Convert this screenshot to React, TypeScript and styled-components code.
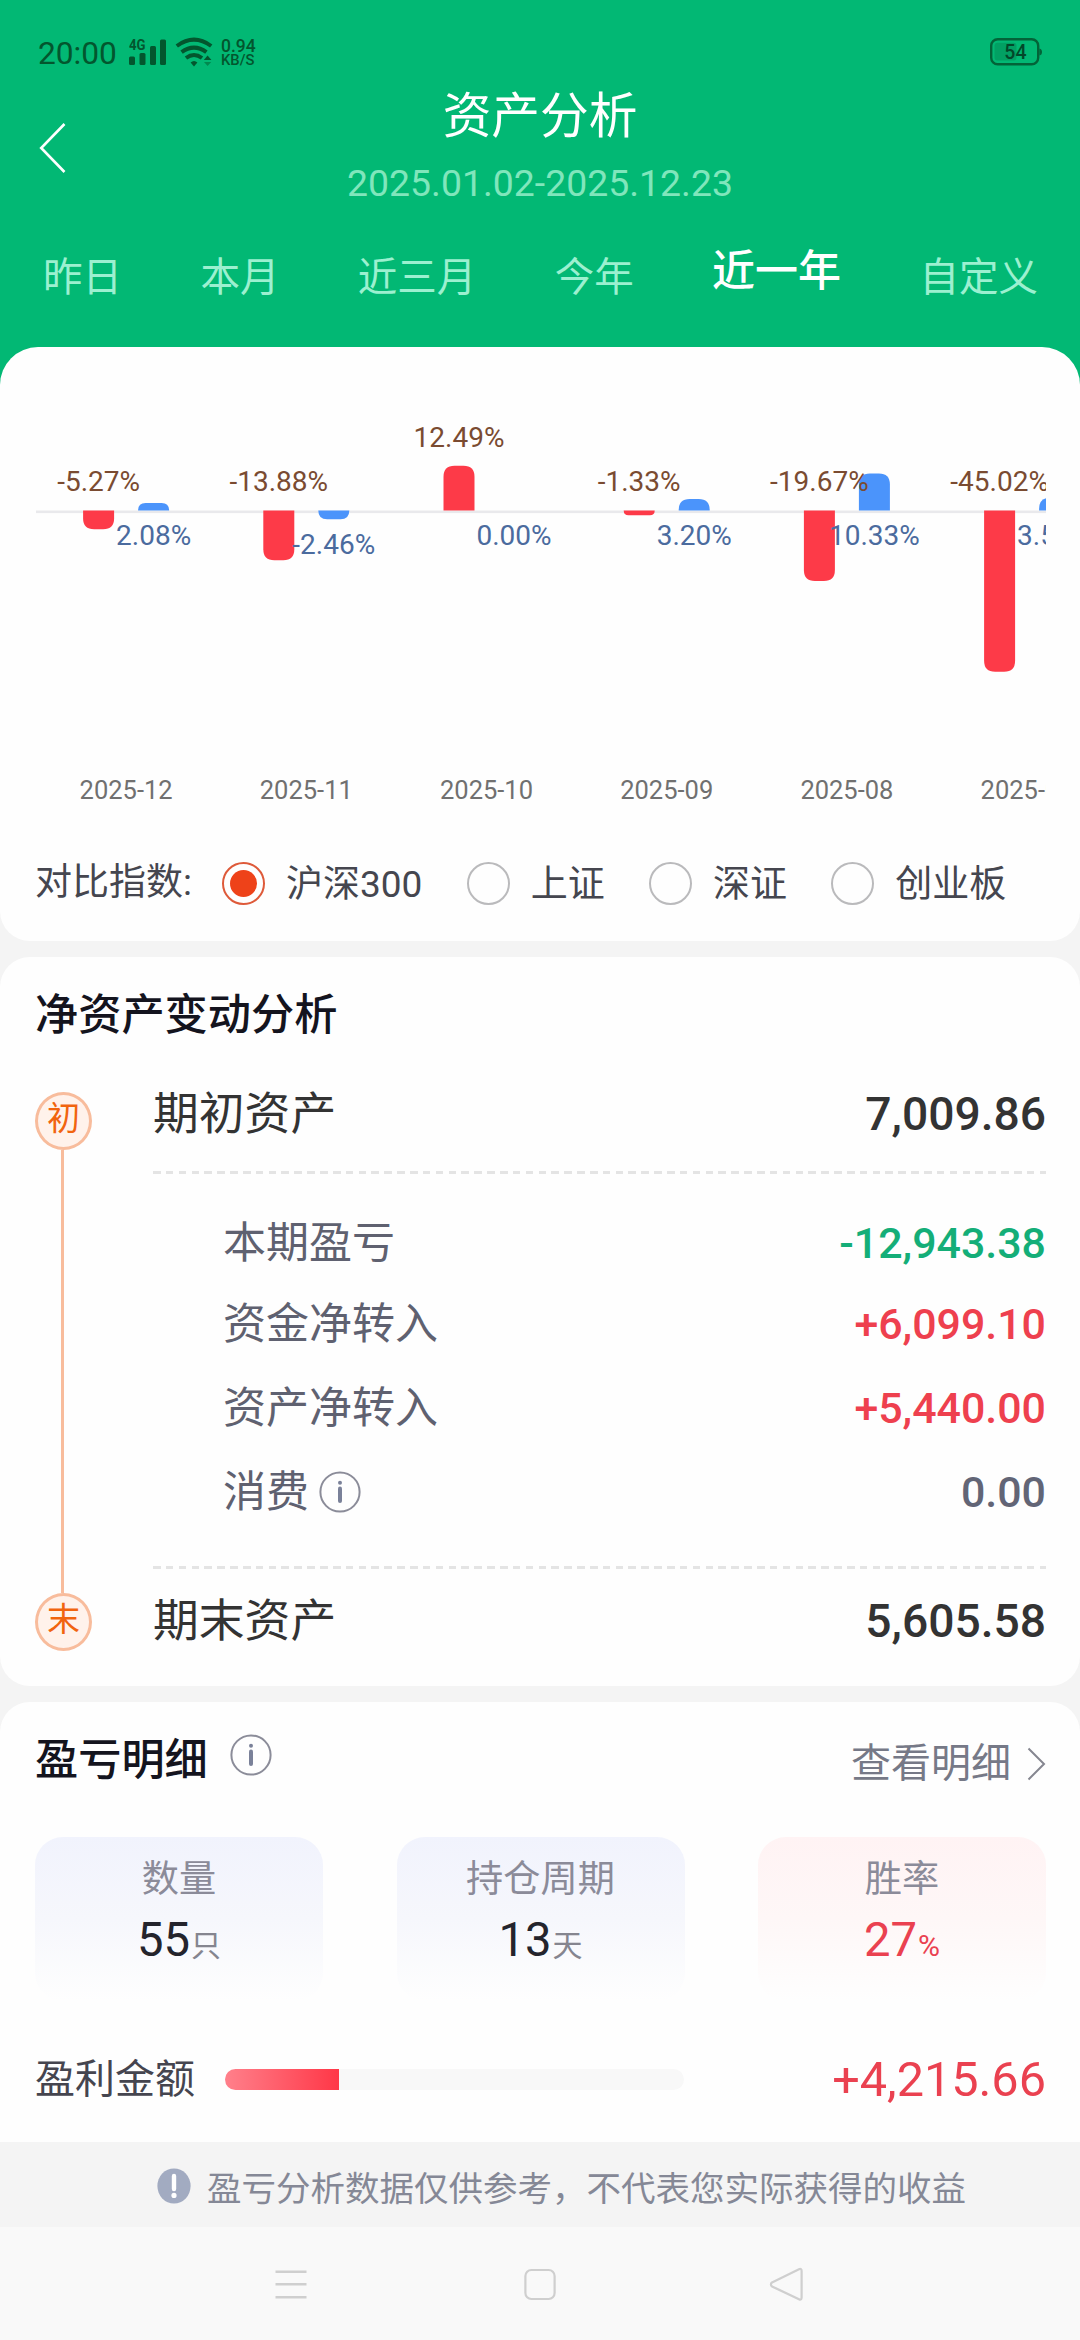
import React from "react";
import styled, { createGlobalStyle, css } from "styled-components";

const GlobalStyle = createGlobalStyle`
  html, body { margin: 0; padding: 0; }
  body {
    background: #f9f9f9;
    font-family: Roboto, "Noto Sans CJK SC", sans-serif;
    -webkit-font-smoothing: antialiased;
  }
  * { box-sizing: border-box; }
`;

const Screen = styled.div`
  width: 1080px;
  height: 2340px;
  display: flex;
  flex-direction: column;
  overflow: hidden;
  background: #f4f4f4;
`;

/* ---------- header ---------- */

const Header = styled.header`
  height: 387px;
  margin-bottom: -40px;
  flex: none;
  display: flex;
  flex-direction: column;
  background: #02b874;
`;

const StatusBar = styled.div`
  height: 76px;
  padding: 27px 37px 0 38px;
  display: flex;
  align-items: flex-start;
  justify-content: space-between;
  color: #03562e;
`;

const StatusGroup = styled.div`
  display: flex;
  align-items: center;
  height: 50px;
`;

const Clock = styled.span`
  font-size: 31.7px;
  line-height: 50px;
  width: 91px;
  padding-top: 3px;
`;

const StatusIcon = styled.svg`
  display: block;
  flex: none;
`;

const WifiIcon = styled(StatusIcon)`
  margin-left: 8px;
`;

const Speed = styled.div`
  display: flex;
  flex-direction: column;
  margin-left: 8px;
  font-weight: 500;
`;

const SpeedValue = styled.span`
  font-size: 17.5px;
  line-height: 15px;
`;

const SpeedUnit = styled.span`
  font-size: 14.8px;
  line-height: 12px;
`;

const TitleBar = styled.div`
  height: 142px;
  display: grid;
  grid-template-columns: 140px 1fr 140px;
`;

const BackButton = styled.button`
  border: 0;
  background: none;
  padding: 46px 0 0 39px;
  display: flex;
  align-items: flex-start;
`;

const TitleBlock = styled.div`
  display: flex;
  flex-direction: column;
  align-items: center;
`;

const PageTitle = styled.h1`
  margin: 5px 0 0;
  font-size: 48.7px;
  line-height: 72px;
  font-weight: 400;
  color: #fff;
`;

const DateRange = styled.div`
  margin-top: 8px;
  font-size: 37.4px;
  line-height: 44px;
  color: #80e6bc;
`;

const Tabs = styled.nav`
  display: flex;
  justify-content: space-between;
  padding: 29.5px 42px 0 43px;
`;

const Tab = styled.span<{ $active?: boolean }>`
  font-size: 39.5px;
  line-height: 60px;
  color: #9cf0d0;
  white-space: nowrap;
  ${(p) =>
    p.$active &&
    css`
      font-size: 43px;
      line-height: 46px;
      font-weight: 500;
      color: #fff;
    `}
`;

/* ---------- cards ---------- */

const Card = styled.section<{ $height: number; $top?: number; $flat?: boolean }>`
  flex: none;
  height: ${(p) => p.$height}px;
  margin-bottom: ${(p) => (p.$flat ? 0 : 16)}px;
  padding: 0 34px 0 35px;
  background: #fefefe;
  border-radius: ${(p) => p.$top ?? 30}px ${(p) => p.$top ?? 30}px
    ${(p) => (p.$flat ? "0 0" : "30px 30px")};
`;

const Chart = styled.svg`
  display: block;
  margin-left: 1px;
`;

const IndexPicker = styled.div`
  display: flex;
  align-items: center;
  height: 60px;
  margin-top: 26.5px;
  font-size: 37px;
  line-height: 54px;
  color: #45464f;
  white-space: nowrap;
`;

const PickerLabel = styled.span`
  width: 187px;
  flex: none;
  margin-top: -2px;
`;

const Option = styled.label`
  display: flex;
  flex: none;
  align-items: center;
  gap: 21px;
  margin-right: 44.3px;
`;

const OptionText = styled.span`
  padding-top: 3px;
`;

const Radio = styled.span<{ $on?: boolean }>`
  width: 43px;
  height: 43px;
  flex: none;
  border-radius: 50%;
  border: 2px solid ${(p) => (p.$on ? "#de5a3a" : "#bababc")};
  display: flex;
  align-items: center;
  justify-content: center;
  &::after {
    content: "";
    width: 27px;
    height: 27px;
    border-radius: 50%;
    background: ${(p) => (p.$on ? "#ee4219" : "transparent")};
  }
`;

const CardTitle = styled.h2`
  margin: 0;
  font-size: 43.2px;
  line-height: 62px;
  font-weight: 500;
  color: #14141e;
`;

const Flow = styled.div`
  display: grid;
  grid-template-columns: 118px 1fr;
  margin-top: 45px;
`;

const Rail = styled.div`
  display: flex;
  flex-direction: column;
  align-items: flex-start;
`;

const RailNode = styled.div`
  width: 57px;
  height: 58px;
  flex: none;
  border: 3px solid #f8bc9c;
  border-radius: 50%;
  background: #fff2eb;
  color: #f1640f;
  font-size: 33px;
  line-height: 47px;
  text-align: center;
`;

const RailLine = styled.div`
  width: 3px;
  height: 443px;
  margin-left: 26px;
  background: #f8bc9c;
`;

const FlowBody = styled.div`
  display: flex;
  flex-direction: column;
`;

const TotalRow = styled.div<{ $gap?: number }>`
  display: flex;
  justify-content: space-between;
  align-items: center;
  height: 66px;
  margin-top: ${(p) => p.$gap ?? 0}px;
  font-size: 45.8px;
  line-height: 66px;
  color: #333;
`;

const TotalLabel = styled.span`
  padding-top: 3px;
`;

const TotalValue = styled.span`
  font-size: 46.2px;
  font-weight: 500;
  padding-top: 2px;
`;

const Dashes = styled.div<{ $gap: number }>`
  height: 3px;
  margin-top: ${(p) => p.$gap}px;
  background: repeating-linear-gradient(90deg, #e4e4e4 0 7.6px, transparent 7.6px 12.85px);
`;

const DetailList = styled.div`
  display: flex;
  flex-direction: column;
  gap: 20px;
  padding: 37px 0 0 70px;
`;

const DetailRow = styled.div<{ $tight?: boolean }>`
  display: flex;
  justify-content: space-between;
  align-items: center;
  height: 64px;
  margin-bottom: ${(p) => (p.$tight ? -3 : 0)}px;
  font-size: 43px;
  line-height: 64px;
  color: #5f6170;
`;

const WithIcon = styled.span`
  display: flex;
  align-items: center;
  gap: 10px;
`;

const tones = { up: "#ee404e", down: "#14ae78", flat: "#626576" };

const DetailValue = styled.span<{ $tone: keyof typeof tones }>`
  font-size: 42.9px;
  font-weight: 500;
  color: ${(p) => tones[p.$tone]};
`;

const SectionHead = styled.div`
  display: flex;
  justify-content: space-between;
  align-items: flex-start;
  height: 89.5px;
  padding-top: 27.5px;
`;

const HeadLeft = styled.div`
  display: flex;
  gap: 22px;
`;

const IconLift = styled.span`
  padding-top: 4.5px;
`;

const MoreLink = styled.a`
  display: flex;
  align-items: center;
  gap: 16px;
  padding-top: 4px;
  font-size: 40px;
  line-height: 60px;
  color: #767987;
`;

const Stats = styled.div`
  display: flex;
  justify-content: space-between;
  margin-top: 45px;
`;

const Stat = styled.div<{ $warm?: boolean }>`
  width: 288px;
  height: 164px;
  padding-top: 15px;
  border-radius: 28px;
  display: flex;
  flex-direction: column;
  align-items: center;
  background: linear-gradient(
    180deg,
    ${(p) => (p.$warm ? "#fff3f4" : "#f1f3fd")} 0%,
    ${(p) => (p.$warm ? "#fef7f7" : "#f6f7fc")} 50%,
    #fefefe 100%
  );
`;

const StatLabel = styled.span`
  font-size: 37.2px;
  line-height: 54px;
  color: #8b8b99;
`;

const StatValue = styled.span<{ $warm?: boolean }>`
  margin-top: 4px;
  font-size: 47.2px;
  line-height: 60px;
  color: ${(p) => (p.$warm ? "#ea4150" : "#24242c")};
`;

const Unit = styled.small<{ $warm?: boolean }>`
  margin-left: 1px;
  font-size: 30px;
  color: ${(p) => (p.$warm ? "#ea4150" : "#85858f")};
`;

const ProfitRow = styled.div`
  display: flex;
  align-items: center;
  height: 60px;
  margin-top: 49px;
`;

const ProfitLabel = styled.span`
  width: 189.5px;
  font-size: 40px;
  line-height: 60px;
  padding-top: 1px;
  color: #45454f;
`;

const Track = styled.div`
  width: 459px;
  height: 21px;
  margin-bottom: 1px;
  border-radius: 11px;
  overflow: hidden;
  background: #f8f8f8;
`;

const TrackFill = styled.div`
  height: 100%;
  background: linear-gradient(90deg, #ff808b, #ff3747);
`;

const ProfitValue = styled.span`
  margin-left: auto;
  font-size: 48.6px;
  line-height: 60px;
  padding-top: 1px;
  color: #ea4150;
`;

/* ---------- footer ---------- */

const Notice = styled.div`
  height: 85px;
  flex: none;
  display: flex;
  align-items: center;
  padding: 2px 0 0 157px;
  gap: 16px;
  font-size: 34.5px;
  line-height: 50px;
  color: #858896;
  white-space: nowrap;
`;

const NoticeText = styled.span`
  padding-top: 6px;
`;

const NavBar = styled.div`
  flex: 1;
  display: flex;
  justify-content: space-between;
  padding: 40px 277px 0 274px;
  background: #f9f9f9;
`;

/* ---------- chart ---------- */

const months = [
  { date: "2025-12", mine: -5.27, index: 2.08 },
  { date: "2025-11", mine: -13.88, index: -2.46 },
  { date: "2025-10", mine: 12.49, index: 0 },
  { date: "2025-09", mine: -1.33, index: 3.2 },
  { date: "2025-08", mine: -19.67, index: 10.33 },
  { date: "2025-07", mine: -45.02, index: 3.54 },
];

const ZERO = 163.5;
const PX_PER_PERCENT = 3.58;
const PITCH = 180.2;
const BAR = 31;

function barPath(x: number, value: number) {
  const h = Math.abs(value) * PX_PER_PERCENT;
  const r = Math.min(11, h);
  const s = value < 0 ? 1 : -1;
  const end = ZERO + s * h;
  return [
    `M${x} ${ZERO}`,
    `V${end - s * r}`,
    `Q${x} ${end} ${x + r} ${end}`,
    `H${x + BAR - r}`,
    `Q${x + BAR} ${end} ${x + BAR} ${end - s * r}`,
    `V${ZERO}Z`,
  ].join("");
}

function ReturnsChart() {
  return (
    <Chart width="1010" height="480" viewBox="0 0 1010 480">
      <rect x="0" y="163.5" width="1010" height="2.6" fill="#e9e9ec" />
      {months.map((m, i) => {
        const center = PITCH * (i + 0.5);
        const mineX = center - 43;
        const indexX = center + 12;
        return (
          <g key={m.date}>
            <path d={barPath(mineX, m.mine)} fill="#fd3a48" />
            {m.index !== 0 && <path d={barPath(indexX, m.index)} fill="#4b94fb" />}
          </g>
        );
      })}
      {months.map((m, i) => {
        const center = PITCH * (i + 0.5);
        const top = ZERO - Math.max(m.mine, 0) * PX_PER_PERCENT;
        const bottom = ZERO + Math.max(-m.index, 0) * PX_PER_PERCENT;
        return (
          <g key={m.date} textAnchor="middle" fontSize="28">
            <text x={center - 27.5} y={Math.round(top - 19.2)} fill="#7a4b31">
              {m.mine.toFixed(2)}%
            </text>
            <text x={center + 27.5} y={bottom + 34.5} fill="#4b6b9e">
              {m.index.toFixed(2)}%
            </text>
            <text x={center} y="452" fontSize="25.5" fill="#707070">
              {m.date}
            </text>
          </g>
        );
      })}
    </Chart>
  );
}

function InfoIcon() {
  return (
    <StatusIcon width="42" height="42" viewBox="0 0 42 42">
      <circle cx="21" cy="21" r="19.6" fill="none" stroke="#8b8c99" strokeWidth="2" />
      <circle cx="21" cy="11.7" r="2" fill="#7a8199" />
      <path d="M21 17.5V30" stroke="#7a8199" strokeWidth="4" strokeLinecap="round" />
    </StatusIcon>
  );
}

const details: { label: string; value: string; tone: keyof typeof tones; info?: boolean }[] = [
  { label: "本期盈亏", value: "-12,943.38", tone: "down" },
  { label: "资金净转入", value: "+6,099.10", tone: "up" },
  { label: "资产净转入", value: "+5,440.00", tone: "up" },
  { label: "消费", value: "0.00", tone: "flat", info: true },
];

const stats = [
  { label: "数量", value: "55", unit: "只" },
  { label: "持仓周期", value: "13", unit: "天" },
  { label: "胜率", value: "27", unit: "%", warm: true },
];

const tabs = ["昨日", "本月", "近三月", "今年", "近一年", "自定义"];
const indexes = ["沪深300", "上证", "深证", "创业板"];

export default function App() {
  const profitShare = 114.5 / 459;
  return (
    <>
      <GlobalStyle />
      <Screen>
        <Header>
          <StatusBar>
            <StatusGroup>
              <Clock>20:00</Clock>
              <StatusIcon width="38" height="28" viewBox="0 0 38 28" fill="#03562e">
                <text x="0" y="11.5" fontSize="14.5" fontWeight="700" textLength="16.5" lengthAdjust="spacingAndGlyphs">
                  4G
                </text>
                <rect x="0" y="18.5" width="6" height="8.5" rx="1.5" />
                <rect x="10.5" y="15" width="6" height="12" rx="1.5" />
                <rect x="21" y="8" width="6" height="19" rx="1.5" />
                <rect x="31" y="1.5" width="6" height="25.5" rx="1.5" />
              </StatusIcon>
              <WifiIcon
                width="38"
                height="30"
                viewBox="0 0 38 30"
                fill="none"
                stroke="#03562e"
                strokeWidth="4"
              >
                <path d="M1.8 9Q19 -3.8 36.2 9" />
                <path d="M6.6 15.2Q19 6 31.4 15.2" />
                <path d="M11 21Q19 15 27 21" />
                <path d="M15.6 25.4Q19 22.4 22.4 25.4L19 29.4Z" fill="#03562e" stroke="none" />
                <path d="M28.8 23L32.6 18.4L36.4 23Z" fill="#03562e" stroke="none" />
                <path d="M29 25L36.2 25L32.6 29Z" fill="#02894f" stroke="none" />
              </WifiIcon>
              <Speed>
                <SpeedValue>0.94</SpeedValue>
                <SpeedUnit>KB/S</SpeedUnit>
              </Speed>
            </StatusGroup>
            <StatusGroup>
              <StatusIcon width="53" height="28" viewBox="0 0 53 28">
                <rect x="1.2" y="1.2" width="47" height="25" rx="6.5" fill="none" stroke="#036338" strokeWidth="2.4" />
                <path d="M49.4 10.5Q52 11 52 14Q52 17 49.4 17.5Z" fill="#036338" />
                <rect x="4.5" y="4.8" width="22" height="17.8" rx="3" fill="#02a063" />
                <text x="25.4" y="20.6" fontSize="19.5" fontWeight="500" textAnchor="middle" fill="#03482a">
                  54
                </text>
              </StatusIcon>
            </StatusGroup>
          </StatusBar>
          <TitleBar>
            <BackButton aria-label="返回">
              <svg width="28" height="52" viewBox="0 0 28 52" fill="none" stroke="#fff" strokeWidth="2.6">
                <path d="M25.5 2L2.2 26L25.5 50" />
              </svg>
            </BackButton>
            <TitleBlock>
              <PageTitle>资产分析</PageTitle>
              <DateRange>2025.01.02-2025.12.23</DateRange>
            </TitleBlock>
          </TitleBar>
          <Tabs>
            {tabs.map((t) => (
              <Tab key={t} $active={t === "近一年"}>
                {t}
              </Tab>
            ))}
          </Tabs>
        </Header>

        <Card $height={594} $top={38}>
          <ReturnsChart />
          <IndexPicker>
            <PickerLabel>对比指数:</PickerLabel>
            {indexes.map((name, i) => (
              <Option key={name}>
                <Radio $on={i === 0} />
                <OptionText>{name}</OptionText>
              </Option>
            ))}
          </IndexPicker>
        </Card>

        <Card $height={729}>
          <SectionHead>
            <CardTitle>净资产变动分析</CardTitle>
          </SectionHead>
          <Flow>
            <Rail>
              <RailNode>初</RailNode>
              <RailLine />
              <RailNode>末</RailNode>
            </Rail>
            <FlowBody>
              <TotalRow $gap={-11.5}>
                <TotalLabel>期初资产</TotalLabel>
                <TotalValue>7,009.86</TotalValue>
              </TotalRow>
              <Dashes $gap={24.5} />
              <DetailList>
                {details.map((d, i) => (
                  <DetailRow key={d.label} $tight={i === 0}>
                    <WithIcon>
                      {d.label}
                      {d.info && <InfoIcon />}
                    </WithIcon>
                    <DetailValue $tone={d.tone}>{d.value}</DetailValue>
                  </DetailRow>
                ))}
              </DetailList>
              <Dashes $gap={42.5} />
              <TotalRow $gap={18}>
                <TotalLabel>期末资产</TotalLabel>
                <TotalValue>5,605.58</TotalValue>
              </TotalRow>
            </FlowBody>
          </Flow>
        </Card>

        <Card $height={440} $flat>
          <SectionHead>
            <HeadLeft>
              <CardTitle>盈亏明细</CardTitle>
              <IconLift>
                <InfoIcon />
              </IconLift>
            </HeadLeft>
            <MoreLink>
              查看明细
              <svg width="19" height="34" viewBox="0 0 19 34" fill="none" stroke="#858690" strokeWidth="2">
                <path d="M1.5 1.5L17 17L1.5 32.5" />
              </svg>
            </MoreLink>
          </SectionHead>
          <Stats>
            {stats.map((s) => (
              <Stat key={s.label} $warm={s.warm}>
                <StatLabel>{s.label}</StatLabel>
                <StatValue $warm={s.warm}>
                  {s.value}
                  <Unit $warm={s.warm}>{s.unit}</Unit>
                </StatValue>
              </Stat>
            ))}
          </Stats>
          <ProfitRow>
            <ProfitLabel>盈利金额</ProfitLabel>
            <Track>
              <TrackFill style={{ width: `${profitShare * 100}%` }} />
            </Track>
            <ProfitValue>+4,215.66</ProfitValue>
          </ProfitRow>
        </Card>

        <Notice>
          <svg width="34" height="36" viewBox="0 0 34 36">
            <ellipse cx="17" cy="18" rx="16.6" ry="17.6" fill="#a2abc1" />
            <path d="M17 8V21" stroke="#fff" strokeWidth="4.4" strokeLinecap="round" />
            <circle cx="17" cy="27.4" r="2.6" fill="#fff" />
          </svg>
          <NoticeText>盈亏分析数据仅供参考，不代表您实际获得的收益</NoticeText>
        </Notice>
        <NavBar>
          <svg width="34" height="34" viewBox="0 0 34 34" stroke="#cfcfcf" strokeWidth="2.4">
            <path d="M1.5 4.7H32.5M1.5 17.3H32.5M1.5 30.3H32.5" />
          </svg>
          <svg width="34" height="34" viewBox="0 0 34 34" fill="none" stroke="#cfcfcf" strokeWidth="2.2">
            <rect x="3.4" y="3" width="29.2" height="29" rx="6" />
          </svg>
          <svg width="34" height="34" viewBox="0 0 34 34" fill="none" stroke="#cfcfcf" strokeWidth="2.2" strokeLinejoin="round">
            <path d="M30 2.2Q32.6 1 32.6 4V30.5Q32.6 33.5 30 32.2L3 19.4Q0.8 17.4 3 15.4Z" />
          </svg>
        </NavBar>
      </Screen>
    </>
  );
}
